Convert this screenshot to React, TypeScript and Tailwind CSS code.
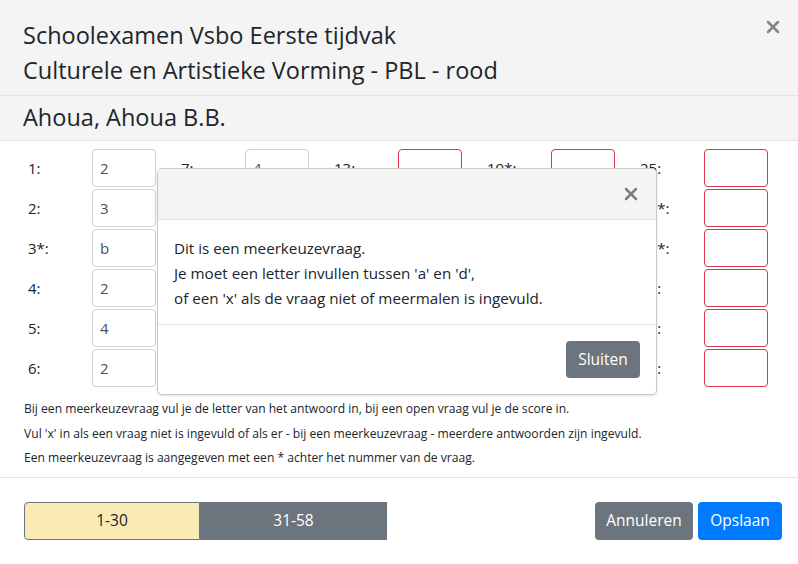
import React from "react";
import { X } from "lucide-react";

interface Vraag {
  label: string;
  waarde: string;
}

// kolommen van 6 vragen (1-30)
const kolommen: Vraag[][] = [
  [
    { label: "1:", waarde: "2" },
    { label: "2:", waarde: "3" },
    { label: "3*:", waarde: "b" },
    { label: "4:", waarde: "2" },
    { label: "5:", waarde: "4" },
    { label: "6:", waarde: "2" },
  ],
  [
    { label: "7:", waarde: "4" },
    { label: "8:", waarde: "1" },
    { label: "9*:", waarde: "c" },
    { label: "10:", waarde: "3" },
    { label: "11:", waarde: "2" },
    { label: "12:", waarde: "1" },
  ],
  [
    { label: "13:", waarde: "" },
    { label: "14:", waarde: "" },
    { label: "15:", waarde: "" },
    { label: "16*:", waarde: "" },
    { label: "17:", waarde: "" },
    { label: "18:", waarde: "" },
  ],
  [
    { label: "19*:", waarde: "" },
    { label: "20:", waarde: "" },
    { label: "21:", waarde: "" },
    { label: "22:", waarde: "" },
    { label: "23:", waarde: "" },
    { label: "24:", waarde: "" },
  ],
  [
    { label: "25:", waarde: "" },
    { label: "26*:", waarde: "" },
    { label: "27*:", waarde: "" },
    { label: "28:", waarde: "" },
    { label: "29:", waarde: "" },
    { label: "30:", waarde: "" },
  ],
];

const App = () => {
  return (
    <div className="relative w-[798px] h-[564px] overflow-hidden bg-white text-[#212529] font-['Open_Sans',sans-serif]">
      {/* Kop */}
      <div className="flex justify-between bg-[#f4f4f4] border-b border-[#e3e3e3] pl-[23px] pr-[15px] pt-[18px] pb-[7px]">
        <h5 className="text-[23.5px] leading-[35px] font-medium">
          Schoolexamen Vsbo Eerste tijdvak
          <br />
          Culturele en Artistieke Vorming - PBL - rood
        </h5>
        <button className="h-[20px] -mt-[1px] text-[#858585]">
          <X size={20} strokeWidth={3} />
        </button>
      </div>

      {/* Leerling */}
      <div className="flex items-center h-[45px] bg-[#f4f4f4] border-b border-[#e3e3e3] px-[23px]">
        <h5 className="text-[23.5px] font-medium">Ahoua, Ahoua B.B.</h5>
      </div>

      {/* Antwoorden */}
      <div className="flex gap-[25px] pl-[28px] pt-[8px]">
        {kolommen.map((kolom, k) => (
          <div key={k} className="flex flex-col gap-[2px]">
            {kolom.map((v) => (
              <div key={v.label} className="flex items-center">
                <span className="w-[64px] text-[15px]">{v.label}</span>
                <input
                  readOnly
                  value={v.waarde}
                  className={`w-[64px] h-[38px] rounded-[4px] border px-[7px] text-[15px] text-[#495057] ${
                    v.waarde ? "border-[#ced4da]" : "border-[#dc3545]"
                  }`}
                />
              </div>
            ))}
          </div>
        ))}
      </div>

      <div className="px-[24px] pt-[10px] text-[12.1px] leading-[24.5px]">
        <p>Bij een meerkeuzevraag vul je de letter van het antwoord in, bij een open vraag vul je de score in.</p>
        <p>Vul 'x' in als een vraag niet is ingevuld of als er - bij een meerkeuzevraag - meerdere antwoorden zijn ingevuld.</p>
        <p>Een meerkeuzevraag is aangegeven met een * achter het nummer van de vraag.</p>
      </div>

      {/* Voet */}
      <div className="mt-[6px] flex items-center justify-between border-t border-[#e3e3e3] pl-[24px] pr-[16px] pt-[24px]">
        <div className="flex h-[38px] text-[15.5px]">
          <button className="w-[176px] rounded-l-[4px] border border-[#6c757d] bg-[#f9eab6] text-[#212529]">1-30</button>
          <button className="w-[187px] bg-[#6c757d] text-white">31-58</button>
        </div>
        <div className="flex gap-[5px] text-[15.5px]">
          <button className="w-[98px] h-[38px] rounded-[4px] bg-[#6c757d] text-white">Annuleren</button>
          <button className="w-[84px] h-[38px] rounded-[4px] bg-[#007bff] text-white">Opslaan</button>
        </div>
      </div>

      {/* Melding */}
      <div className="absolute left-[157px] top-[168px] w-[500px] rounded-[5px] border border-[#c8c8c8] bg-white shadow-sm overflow-hidden">
        <div className="flex h-[51px] items-center justify-end border-b border-[#dee2e6] bg-[#f4f4f4] pr-[15px]">
          <button className="text-[#7d7d7d]">
            <X size={20} strokeWidth={3} />
          </button>
        </div>
        <div className="px-[16px] pt-[16px] pb-[13px] text-[15.2px] leading-[25px]">
          <p>Dit is een meerkeuzevraag.</p>
          <p>Je moet een letter invullen tussen 'a' en 'd',</p>
          <p>of een 'x' als de vraag niet of meermalen is ingevuld.</p>
        </div>
        <div className="flex justify-end border-t border-[#dee2e6] p-[16px]">
          <button className="w-[74px] h-[37px] rounded-[4px] bg-[#6c757d] text-[15.5px] text-white">Sluiten</button>
        </div>
      </div>
    </div>
  );
};

export default App;
